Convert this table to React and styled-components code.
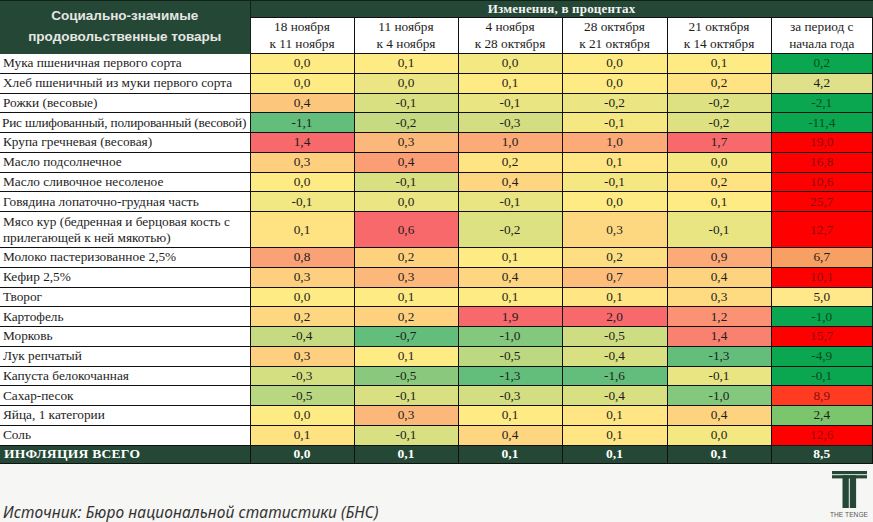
import React from "react";
import styled, { createGlobalStyle } from "styled-components";

const Global = createGlobalStyle`
  html, body { margin: 0; padding: 0; background: #f6f6f4; }
  body { width: 873px; height: 522px; overflow: hidden; }
`;

const DARK = "#254836";

const Page = styled.div`
  width: 873px;
  height: 522px;
  display: flex;
  flex-direction: column;
  background: #f6f6f4;
`;

const Table = styled.table`
  width: 873px;
  border-collapse: collapse;
  table-layout: fixed;
  font-family: "Liberation Serif", "Times New Roman", serif;
  font-size: 13.3px;
  color: #1d1d1d;
  background: #fff;
`;

const TitleCell = styled.th`
  background: ${DARK};
  color: #e4e6e4;
  font-family: "Liberation Sans", Arial, sans-serif;
  font-weight: 700;
  font-size: 13.5px;
  line-height: 21px;
  text-align: center;
  padding: 0 0 2px;
  border-top: 1px solid #0f2218;
  border-right: 1px solid #0f2218;
`;

const BandCell = styled.th`
  background: ${DARK};
  color: #f4f4f4;
  font-weight: 700;
  font-size: 13px;
  height: 16px;
  line-height: 16px;
  padding: 0;
  text-align: center;
  letter-spacing: 0.2px;
  border-top: 1px solid #0f2218;
  border-bottom: 1px solid #111;
`;

const SubHead = styled.th`
  font-weight: 400;
  height: 34px;
  line-height: 17px;
  padding: 0 0 1px;
  text-align: center;
  background: #fff;
  border: 1px solid #111;
  border-top: none;
  white-space: nowrap;
`;

const Row = styled.tr`
  height: ${(p) => (p.$tall ? 36 : 19.75)}px;
`;

const Label = styled.td`
  padding: 0 0 0 ${(p) => (p.$tight ? 2 : 3)}px;
  line-height: 16px;
  white-space: nowrap;
  overflow: hidden;
  letter-spacing: ${(p) => (p.$tight ? "-0.2px" : "normal")};
  border-bottom: 1px solid #111;
  border-right: 1px solid #111;
  background: #fff;
`;

const Num = styled.td`
  padding: 0;
  text-align: center;
  border: 1px solid #111;
  border-top: none;
  background: ${(p) => p.$bg};
  color: ${(p) => p.$fg || "#1d1d1d"};
`;

const TotalRow = styled.tr`
  height: 18px;
  background: ${DARK};
  color: #fff;
  font-weight: 700;
  font-size: 13.5px;
`;

const TotalLabel = styled.td`
  padding: 0 0 0 4px;
  letter-spacing: 0.3px;
  border-right: 1px solid #111;
  border-bottom: 1px solid #111;
`;

const TotalNum = styled.td`
  padding: 0;
  text-align: center;
  border-right: 1px solid #111;
  border-bottom: 1px solid #111;
`;

const Footer = styled.div`
  flex: 1;
  display: flex;
  justify-content: space-between;
  align-items: flex-end;
  padding: 0 5px 3px 3px;
`;

const Source = styled.div`
  font-family: "Noto Sans", "Open Sans", sans-serif;
  font-style: italic;
  font-size: 15.5px;
  color: #333;
  line-height: 20px;
  margin-bottom: -3px;
  letter-spacing: 0.1px;
`;

const Logo = styled.div`
  display: flex;
  flex-direction: column;
  align-items: center;
  width: 38px;
  gap: 3px;
  margin-bottom: 1px;
`;

const LogoText = styled.div`
  font-family: "Liberation Sans", Arial, sans-serif;
  font-size: 6.5px;
  color: #555;
  letter-spacing: 0.1px;
  white-space: nowrap;
  line-height: 7px;
`;

const GREEN = [99, 190, 123];
const YELLOW = [255, 235, 132];
const RED = [248, 105, 107];

const mix = (a, b, t) =>
  `rgb(${a.map((x, i) => Math.round(x + (b[i] - x) * t)).join(",")})`;

function scaleFor(values) {
  const s = [...values].sort((a, b) => a - b);
  const min = s[0];
  const max = s[s.length - 1];
  const mid = s[Math.floor(s.length / 2)];
  return (v) => {
    if (v <= mid) {
      const t = mid === min ? 0 : (v - min) / (mid - min);
      return mix(GREEN, YELLOW, t);
    }
    const t = max === mid ? 0 : (v - mid) / (max - mid);
    return mix(YELLOW, RED, t);
  };
}

const G = "#0aa650";
const R = "#ff0000";

const rows = [
  ["Мука пшеничная первого сорта", [0.0, 0.1, 0.0, 0.0, 0.1], 0.2, G],
  ["Хлеб пшеничный из муки первого сорта", [0.0, 0.0, 0.1, 0.0, 0.2], 4.2, "#dfe089"],
  ["Рожки (весовые)", [0.4, -0.1, -0.1, -0.2, -0.2], -2.1, G],
  ["Рис шлифованный, полированный (весовой)", [-1.1, -0.2, -0.3, -0.1, -0.2], -11.4, G],
  ["Крупа гречневая (весовая)", [1.4, 0.3, 1.0, 1.0, 1.7], 19.0, R],
  ["Масло подсолнечное", [0.3, 0.4, 0.2, 0.1, 0.0], 16.8, R],
  ["Масло сливочное несоленое", [0.0, -0.1, 0.4, -0.1, 0.2], 10.6, R],
  ["Говядина лопаточно-грудная часть", [-0.1, 0.0, -0.1, 0.0, 0.1], 25.7, R],
  [
    ["Мясо кур (бедренная и берцовая кость с", "прилегающей к ней мякотью)"],
    [0.1, 0.6, -0.2, 0.3, -0.1],
    12.7,
    R,
  ],
  ["Молоко пастеризованное 2,5%", [0.8, 0.2, 0.1, 0.2, 0.9], 6.7, "#f8a063"],
  ["Кефир 2,5%", [0.3, 0.3, 0.4, 0.7, 0.4], 10.1, R],
  ["Творог", [0.0, 0.1, 0.1, 0.1, 0.3], 5.0, "#ffe88a"],
  ["Картофель", [0.2, 0.2, 1.9, 2.0, 1.2], -1.0, G],
  ["Морковь", [-0.4, -0.7, -1.0, -0.5, 1.4], 15.7, R],
  ["Лук репчатый", [0.3, 0.1, -0.5, -0.4, -1.3], -4.9, G],
  ["Капуста белокочанная", [-0.3, -0.5, -1.3, -1.6, -0.1], -0.1, G],
  ["Сахар-песок", [-0.5, -0.1, -0.3, -0.4, -1.0], 8.9, "#ff3b22"],
  ["Яйца, 1 категории", [0.0, 0.3, 0.1, 0.1, 0.4], 2.4, "#7bc66c"],
  ["Соль", [0.1, -0.1, 0.4, 0.1, 0.0], 12.6, R],
];

const heads = [
  ["18 ноября", "к 11 ноября"],
  ["11 ноября", "к 4 ноября"],
  ["4 ноября", "к 28 октября"],
  ["28 октября", "к 21 октября"],
  ["21 октября", "к 14 октября"],
  ["за период с", "начала года"],
];

const scales = [0, 1, 2, 3, 4].map((c) => scaleFor(rows.map((r) => r[1][c])));

const fmt = (v) => v.toFixed(1).replace(".", ",");

const lastFg = (bg) =>
  bg === G ? "#0c4a1f" : bg === R || bg === "#ff3b22" ? "#8a0d0d" : "#1d1d1d";

function TengeLogo() {
  return (
    <svg width="35" height="37" viewBox="0 0 35 37" aria-hidden="true">
      <rect x="0" y="0" width="35" height="3.2" fill={DARK} />
      <rect x="0" y="4.2" width="35" height="3.2" fill={DARK} />
      <rect x="10.5" y="4.2" width="6.3" height="32.8" fill={DARK} />
      <rect x="17.8" y="4.2" width="6.3" height="32.8" fill={DARK} />
    </svg>
  );
}

export default function App() {
  return (
    <Page>
      <Global />
      <Table>
        <colgroup>
          <col style={{ width: 250 }} />
          <col style={{ width: 104 }} />
          <col style={{ width: 104 }} />
          <col style={{ width: 104 }} />
          <col style={{ width: 105 }} />
          <col style={{ width: 104 }} />
          <col />
        </colgroup>
        <thead>
          <tr>
            <TitleCell rowSpan={2}>
              Социально-значимые
              <br />
              продовольственные товары
            </TitleCell>
            <BandCell colSpan={6}>Изменения, в процентах</BandCell>
          </tr>
          <tr>
            {heads.map((h, i) => (
              <SubHead key={i}>
                {h[0]}
                <br />
                {h[1]}
              </SubHead>
            ))}
          </tr>
        </thead>
        <tbody>
          {rows.map(([name, vals, total, tbg], ri) => {
            const tall = Array.isArray(name);
            return (
              <Row key={ri} $tall={tall}>
                <Label $tight={!tall && name.length > 38}>
                  {tall ? (
                    <>
                      {name[0]}
                      <br />
                      {name[1]}
                    </>
                  ) : (
                    name
                  )}
                </Label>
                {vals.map((v, ci) => (
                  <Num key={ci} $bg={scales[ci](v)}>
                    {fmt(v)}
                  </Num>
                ))}
                <Num $bg={tbg} $fg={lastFg(tbg)}>
                  {fmt(total)}
                </Num>
              </Row>
            );
          })}
          <TotalRow>
            <TotalLabel>ИНФЛЯЦИЯ ВСЕГО</TotalLabel>
            {[0.0, 0.1, 0.1, 0.1, 0.1, 8.5].map((v, i) => (
              <TotalNum key={i}>{fmt(v)}</TotalNum>
            ))}
          </TotalRow>
        </tbody>
      </Table>
      <Footer>
        <Source>Источник: Бюро национальной статистики (БНС)</Source>
        <Logo>
          <TengeLogo />
          <LogoText>THE TENGE</LogoText>
        </Logo>
      </Footer>
    </Page>
  );
}
